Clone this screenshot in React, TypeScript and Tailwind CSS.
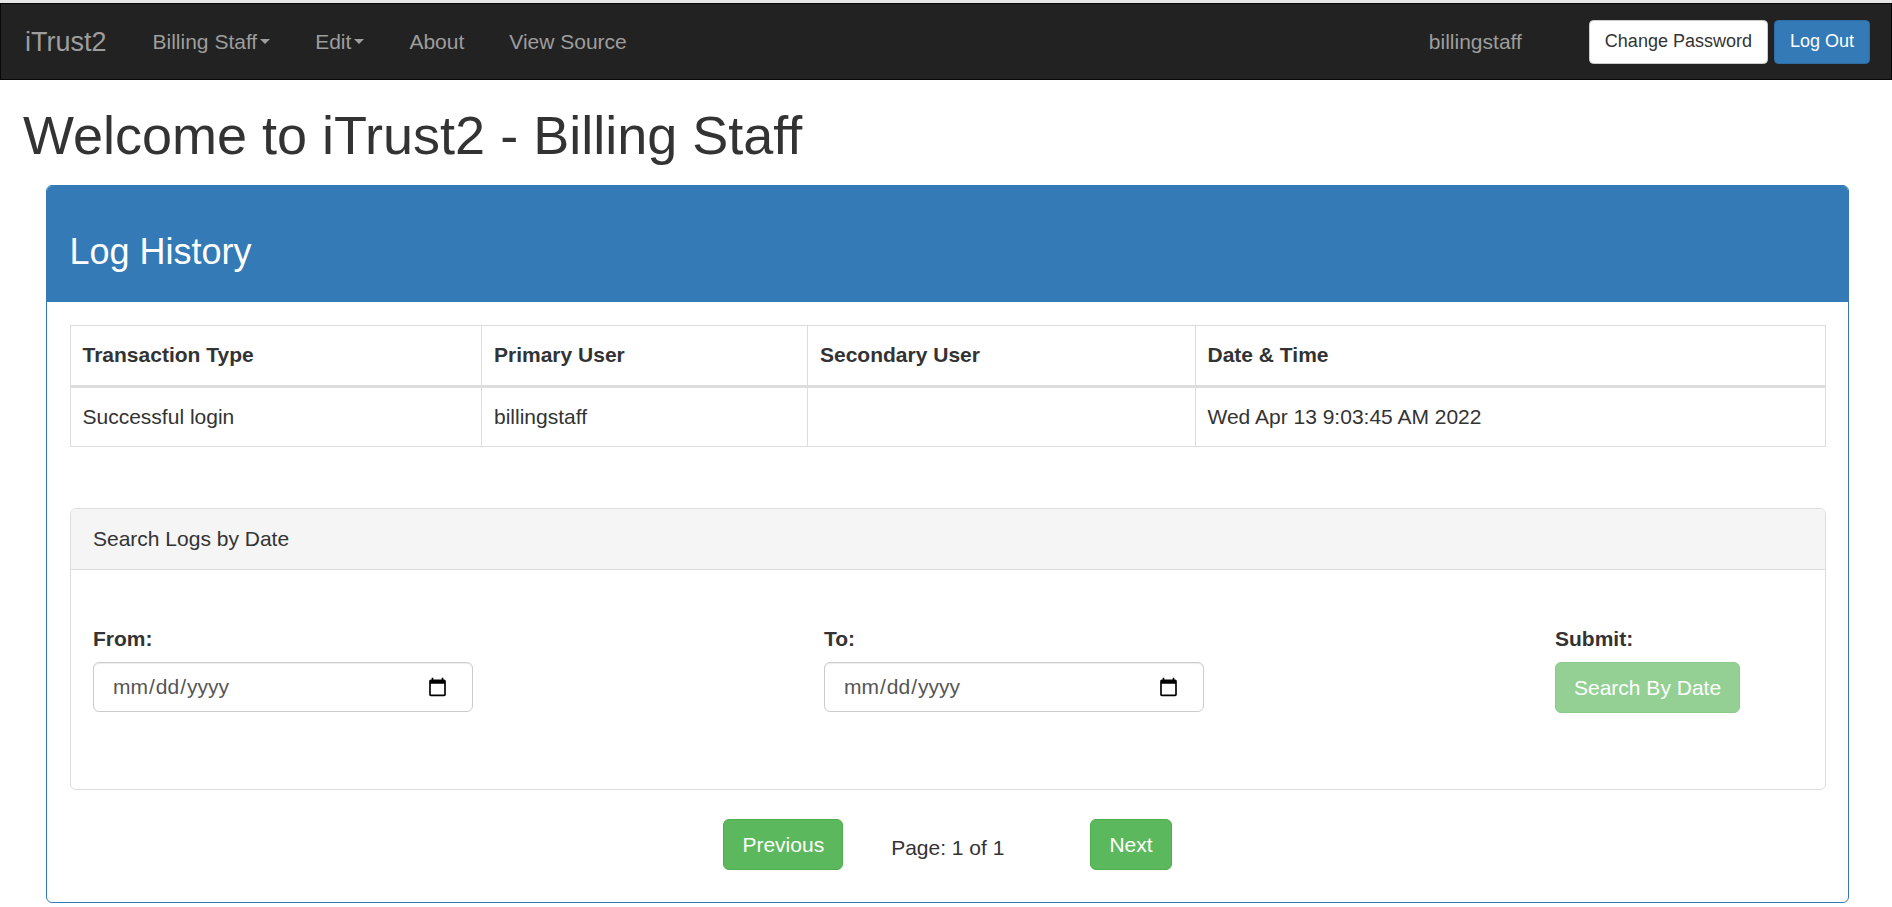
import React from "react"

const Caret = () => (
  <span className="ml-[3px] inline-block h-0 w-0 border-x-[5px] border-t-[5px] border-x-transparent border-t-[#9d9d9d] align-middle" />
)

const NavLink = ({ label, caret }: { label: string; caret?: boolean }) => (
  <a className="flex items-center px-[22.5px] text-[21px] leading-[30px] text-[#9d9d9d]">
    {label}
    {caret && <Caret />}
  </a>
)

const DateField = ({ label }: { label: string }) => (
  <div>
    <label className="mb-[8px] block text-[21px] font-bold leading-[30px]">{label}</label>
    <input
      type="date"
      className="h-[50px] w-[380px] rounded-[6px] border border-[#ccc] bg-white pl-[18px] pr-[22px] text-[21px] text-[#555] shadow-[inset_0_1px_1px_rgba(0,0,0,0.075)]"
      style={{ fontFamily: '"Liberation Sans", Arial, sans-serif' }}
    />
  </div>
)

const columns = ["Transaction Type", "Primary User", "Secondary User", "Date & Time"]
const rows = [["Successful login", "billingstaff", "", "Wed Apr 13 9:03:45 AM 2022"]]

export default function App() {
  return (
    <div className="min-h-[907px] bg-white font-['Liberation_Sans',Arial,sans-serif] text-[#333]">
      <div className="h-[3px] bg-[#e6e6e6]" />
      <nav className="flex h-[77px] items-center border border-[#080808] bg-[#222]">
        <a className="ml-[24px] mr-[23.5px] text-[27px] leading-[30px] text-[#9d9d9d]">iTrust2</a>
        <NavLink label="Billing Staff" caret />
        <NavLink label="Edit" caret />
        <NavLink label="About" />
        <NavLink label="View Source" />
        <span className="ml-auto mr-[67px] text-[21px] leading-[30px] text-[#9d9d9d]">billingstaff</span>
        <button className="h-[44px] rounded-[4.5px] border border-[#ccc] bg-white px-[15px] text-[18px] text-[#333]">
          Change Password
        </button>
        <button className="ml-[6px] mr-[21px] h-[44px] rounded-[4.5px] border border-[#2e6da4] bg-[#337ab7] px-[15px] text-[18px] text-white">
          Log Out
        </button>
      </nav>

      <h1 className="mt-[26px] pl-[23px] text-[54px] leading-[59.4px] font-normal">
        Welcome to iTrust2 - Billing Staff
      </h1>

      <div className="ml-[46px] mr-[43px] mt-[20px] rounded-[6px] border border-[#337ab7]">
        <div className="rounded-t-[5px] bg-[#337ab7] px-[22.5px] pb-[30px] pt-[46px]">
          <h3 className="text-[36px] leading-[39.6px] font-normal text-white">Log History</h3>
        </div>

        <div className="px-[22.5px] pb-[32px] pt-[22.5px]">
          {/* log table */}
          <div className="border border-[#ddd]">
            <div className="grid grid-cols-[410.5px_326px_387.5px_1fr]">
              {columns.map((c, i) => (
                <div
                  key={c}
                  className={`flex h-[62px] items-center border-b-[3px] border-[#ddd] px-[12px] text-[21px] font-bold leading-[30px] ${i > 0 ? "border-l" : ""}`}
                >
                  {c}
                </div>
              ))}
              {rows.map((r) =>
                r.map((cell, i) => (
                  <div
                    key={i}
                    className={`flex h-[58px] items-center border-[#ddd] px-[12px] text-[21px] leading-[30px] ${i > 0 ? "border-l" : ""}`}
                  >
                    {cell}
                  </div>
                ))
              )}
            </div>
          </div>

          {/* search by date */}
          <div className="mt-[61px] rounded-[6px] border border-[#ddd]">
            <div className="rounded-t-[5px] border-b border-[#ddd] bg-[#f5f5f5] px-[22.5px] py-[15px] text-[21px] leading-[30px]">
              Search Logs by Date
            </div>
            <div className="grid grid-cols-[731px_731px_1fr] px-[22.5px] pb-[76px] pt-[54.5px]">
              <DateField label="From:" />
              <DateField label="To:" />
              <div>
                <label className="mb-[8px] block text-[21px] font-bold leading-[30px]">Submit:</label>
                <button
                  disabled
                  className="h-[51px] rounded-[6px] border border-[#4cae4c] bg-[#5cb85c] px-[18px] text-[21px] text-white opacity-65"
                >
                  Search By Date
                </button>
              </div>
            </div>
          </div>

          {/* pagination */}
          <div className="mt-[29px] flex items-start justify-center">
            <button className="h-[51px] rounded-[6px] border border-[#4cae4c] bg-[#5cb85c] px-[18px] text-[21px] text-white">
              Previous
            </button>
            <span className="ml-[48px] mt-[14px] text-[21px] leading-[30px]">Page: 1 of 1</span>
            <button className="ml-[86px] h-[51px] rounded-[6px] border border-[#4cae4c] bg-[#5cb85c] px-[18px] text-[21px] text-white">
              Next
            </button>
          </div>
        </div>
      </div>
    </div>
  )
}
